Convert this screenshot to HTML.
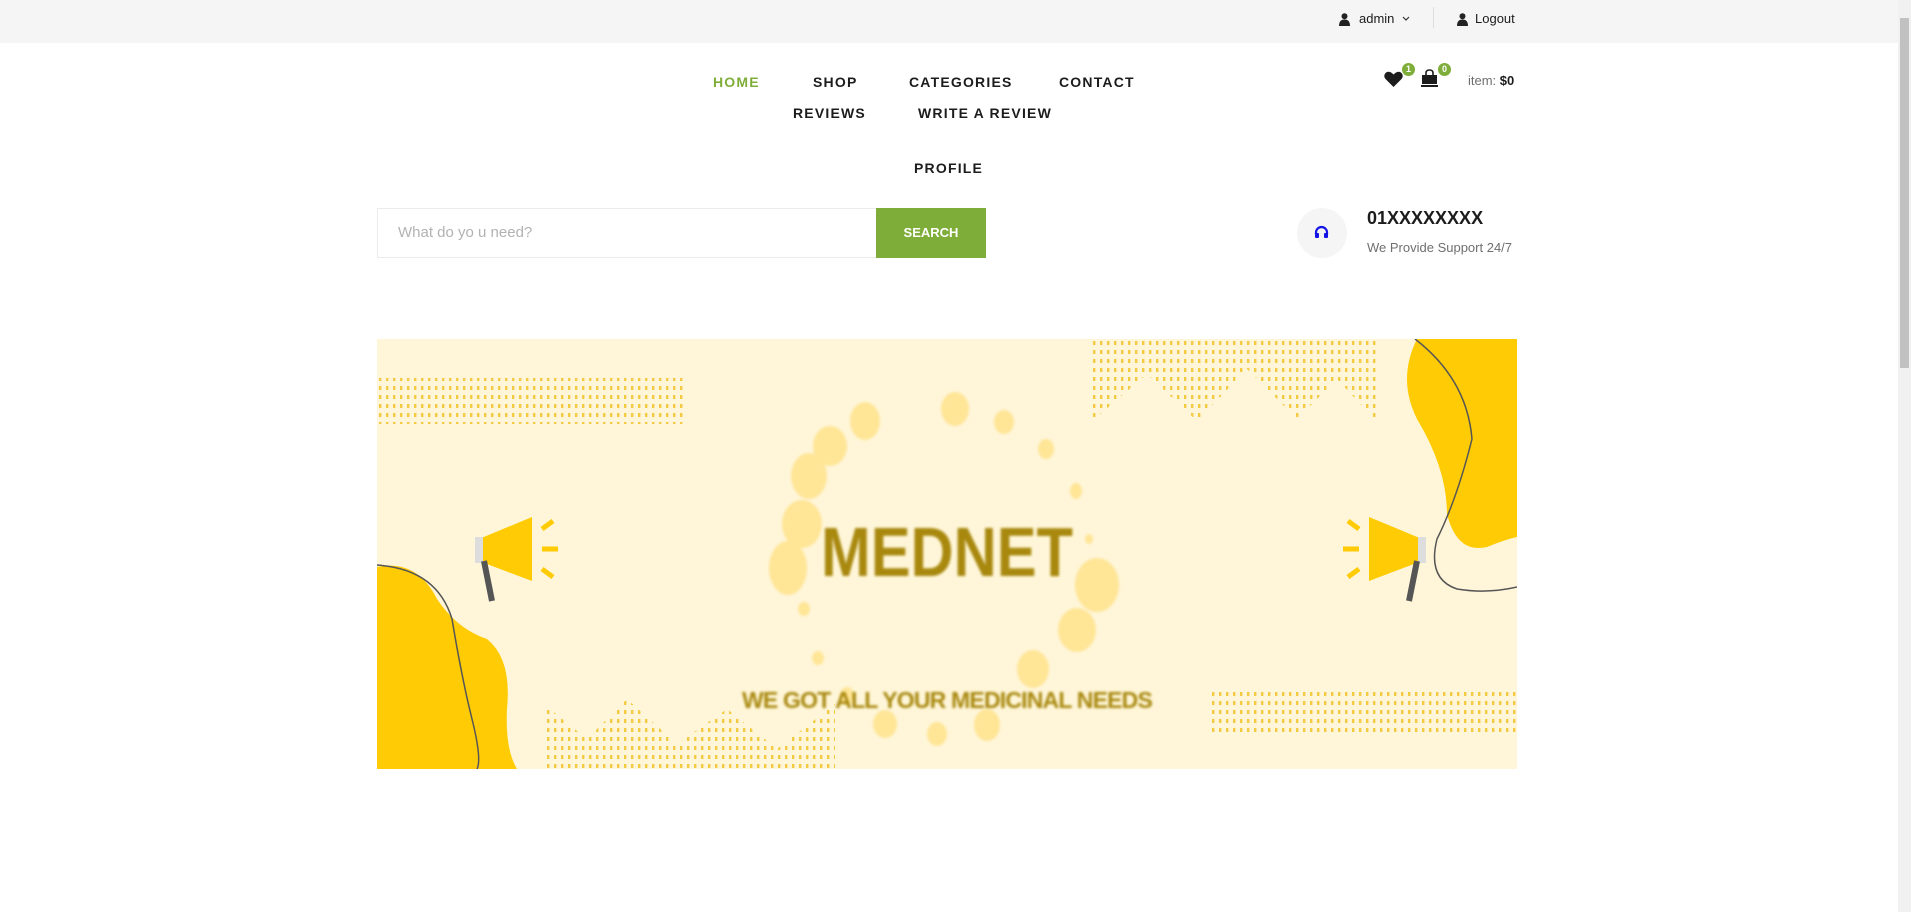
<!DOCTYPE html>
<html><head><meta charset="utf-8"><style>
*{margin:0;padding:0;box-sizing:border-box}
body{width:1911px;height:912px;overflow:hidden;background:#fff;font-family:"Liberation Sans",sans-serif;position:relative}
.top{position:absolute;left:0;top:0;width:1898px;height:43px;background:#f5f5f5}
.sb{position:absolute;right:0;top:0;width:13px;height:912px;background:#f1f1f1}
.sb div{position:absolute;left:2px;top:18px;width:9px;height:350px;background:#c1c1c1}
.a{position:absolute;white-space:nowrap}
.nav{font-weight:bold;font-size:14px;letter-spacing:1.2px;color:#1c1c1c}
.badge{position:absolute;width:13px;height:13px;border-radius:50%;background:#7fad39;color:#fff;font-size:9px;font-weight:bold;text-align:center;line-height:13px}
</style></head><body>
<div class="top"></div>
<div class="sb"><div></div></div>
<svg class="a" style="left:1339px;top:13px" width="11" height="13" viewBox="0 0 11 13"><circle cx="5.5" cy="3.2" r="3" fill="#222"/><path d="M0 13 Q0 6.5 5.5 6.5 Q11 6.5 11 13Z" fill="#222"/></svg>
<div class="a" style="left:1359px;top:11px;font-size:13px;color:#1c1c1c">admin</div>
<svg class="a" style="left:1402px;top:16px" width="8" height="6"><path d="M1 1 L4 4 L7 1" stroke="#333" fill="none" stroke-width="1.2"/></svg>
<div class="a" style="left:1433px;top:7px;width:1px;height:21px;background:#ddd"></div>
<svg class="a" style="left:1457px;top:13px" width="11" height="13" viewBox="0 0 11 13"><circle cx="5.5" cy="3.2" r="3" fill="#222"/><path d="M0 13 Q0 6.5 5.5 6.5 Q11 6.5 11 13Z" fill="#222"/></svg>
<div class="a" style="left:1475px;top:11px;font-size:13px;color:#1c1c1c">Logout</div>

<div class="a nav" style="left:713px;top:74px;color:#7fad39">HOME</div>
<div class="a nav" style="left:813px;top:74px">SHOP</div>
<div class="a nav" style="left:909px;top:74px">CATEGORIES</div>
<div class="a nav" style="left:1059px;top:74px">CONTACT</div>
<div class="a nav" style="left:793px;top:105px">REVIEWS</div>
<div class="a nav" style="left:918px;top:105px">WRITE A REVIEW</div>
<div class="a nav" style="left:914px;top:160px">PROFILE</div>

<svg class="a" style="left:1384px;top:71px" width="19" height="16" viewBox="0 0 19 16"><path d="M9.5 16 L1.5 8 Q-1 5 1.5 2 Q5 -1 9.5 3.5 Q14 -1 17.5 2 Q20 5 17.5 8Z" fill="#1c1c1c"/></svg>
<div class="badge" style="left:1402px;top:63px">1</div>
<svg class="a" style="left:1421px;top:69px" width="17" height="18" viewBox="0 0 17 18"><path d="M5 7 V4 Q5 1 8.5 1 Q12 1 12 4 V7" stroke="#1c1c1c" stroke-width="1.6" fill="none"/><rect x="1" y="6" width="15" height="9" fill="#1c1c1c"/><rect x="0" y="16" width="17" height="2" fill="#1c1c1c"/></svg>
<div class="badge" style="left:1438px;top:63px">0</div>
<div class="a" style="left:1468px;top:73px;font-size:13px;color:#6f6f6f">item: <b style="color:#1c1c1c">$0</b></div>

<div class="a" style="left:377px;top:208px;width:500px;height:50px;border:1px solid #ebebeb"></div>
<div class="a" style="left:398px;top:224px;font-size:15px;color:#b2b2b2">What do yo u need?</div>
<div class="a" style="left:876px;top:208px;width:110px;height:50px;background:#7fad39;color:#fff;font-weight:bold;font-size:13px;text-align:center;line-height:50px">SEARCH</div>

<div class="a" style="left:1297px;top:208px;width:50px;height:50px;border-radius:50%;background:#f5f5f5"></div>
<svg class="a" style="left:1314px;top:225px" width="15" height="15" viewBox="0 0 15 15"><path d="M2 10 V7.5 A5.5 5.5 0 0 1 13 7.5 V10" stroke="#1414e6" stroke-width="2.2" fill="none"/><rect x="1" y="8" width="4" height="5" rx="1" fill="#1414e6"/><rect x="10" y="8" width="4" height="5" rx="1" fill="#1414e6"/></svg>
<div class="a" style="left:1367px;top:208px;font-size:18px;font-weight:bold;color:#1c1c1c">01XXXXXXXX</div>
<div class="a" style="left:1367px;top:240px;font-size:13px;color:#6f6f6f">We Provide Support 24/7</div>

<svg class="a" style="left:377px;top:339px" width="1140" height="430" viewBox="0 0 1140 430">
<defs>
<pattern id="d" width="7" height="9" patternUnits="userSpaceOnUse"><rect x="2" y="2" width="2.4" height="4" fill="#f2c228"/></pattern>
<filter id="b"><feGaussianBlur stdDeviation="1.2"/></filter>
</defs>
<rect width="1140" height="430" fill="#fff6d9"/>
<g fill="url(#d)" opacity="0.85">
<rect x="0" y="39" width="310" height="46"/>
<rect x="834" y="351" width="306" height="45"/>
<path d="M714 0 H1000 V83 L960 40 L920 80 L870 30 L820 82 L770 35 L714 83Z"/>
<path d="M168 430 V366 L210 400 L250 360 L300 405 L350 370 L400 410 L458 365 V430Z"/>
</g>
<g fill="#ffe596" filter="url(#b)">
<ellipse cx="488" cy="82" rx="15" ry="19"/><ellipse cx="578" cy="70" rx="14" ry="17"/><ellipse cx="627" cy="83" rx="10" ry="12"/>
<ellipse cx="453" cy="107" rx="17" ry="20"/><ellipse cx="669" cy="110" rx="8" ry="10"/><ellipse cx="432" cy="137" rx="18" ry="23"/>
<ellipse cx="699" cy="152" rx="6" ry="8"/><ellipse cx="425" cy="185" rx="20" ry="24"/><ellipse cx="411" cy="229" rx="19" ry="27"/>
<ellipse cx="712" cy="200" rx="4" ry="5"/><ellipse cx="720" cy="246" rx="22" ry="27"/><ellipse cx="700" cy="291" rx="19" ry="22"/>
<ellipse cx="427" cy="270" rx="6" ry="7"/><ellipse cx="656" cy="330" rx="16" ry="19"/><ellipse cx="441" cy="319" rx="6" ry="7"/>
<ellipse cx="470" cy="357" rx="7" ry="9"/><ellipse cx="508" cy="385" rx="12" ry="14"/><ellipse cx="610" cy="386" rx="13" ry="16"/><ellipse cx="560" cy="395" rx="10" ry="12"/>
</g>
<path d="M0 228 Q40 220 60 260 Q80 290 110 300 Q135 320 130 370 Q128 410 140 430 H0Z" fill="#ffcb05"/>
<path d="M0 226 Q60 230 75 280 Q85 340 95 380 Q105 420 100 430" stroke="#555" stroke-width="1.5" fill="none"/>
<path d="M1040 0 Q1020 40 1040 80 Q1070 130 1070 175 Q1080 215 1110 208 Q1130 200 1140 198 V0Z" fill="#ffcb05"/>
<path d="M1038 0 Q1090 40 1095 100 Q1080 160 1060 200 Q1050 240 1080 250 Q1110 255 1140 248" stroke="#555" stroke-width="1.5" fill="none"/>
<g>
<path d="M102 200 L155 178 V242 L102 222Z" fill="#ffcb05"/><rect x="98" y="198" width="8" height="26" fill="#ddd"/>
<path d="M107 222 L115 262" stroke="#555" stroke-width="6"/>
<path d="M165 190 L176 182 M165 210 H181 M165 230 L176 238" stroke="#ffcb05" stroke-width="5"/>
</g>
<g>
<path d="M1045 200 L992 178 V242 L1045 222Z" fill="#ffcb05"/><rect x="1041" y="198" width="8" height="26" fill="#ddd"/>
<path d="M1040 222 L1032 262" stroke="#555" stroke-width="6"/>
<path d="M982 190 L971 182 M982 210 H966 M982 230 L971 238" stroke="#ffcb05" stroke-width="5"/>
</g>
<g filter="url(#b)" fill="#a8880d" font-family="Liberation Sans,sans-serif" font-weight="bold">
<text x="444" y="237" font-size="70" textLength="252" lengthAdjust="spacingAndGlyphs">MEDNET</text>
<text x="570" y="369" font-size="23" text-anchor="middle" letter-spacing="-0.8">WE GOT ALL YOUR MEDICINAL NEEDS</text>
</g>
</svg>
</body></html>
